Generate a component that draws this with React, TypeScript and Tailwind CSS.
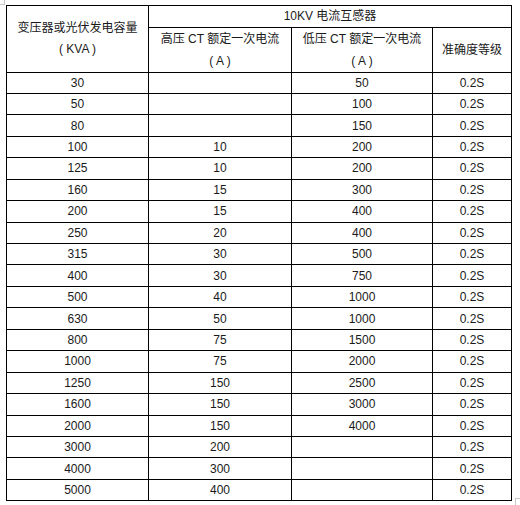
import React from 'react';

type Row = [string, string, string];

// 变压器容量 / 高压CT / 低压CT
const rows: Row[] = [
  ['30', '', '50'],
  ['50', '', '100'],
  ['80', '', '150'],
  ['100', '10', '200'],
  ['125', '10', '200'],
  ['160', '15', '300'],
  ['200', '15', '400'],
  ['250', '20', '400'],
  ['315', '30', '500'],
  ['400', '30', '750'],
  ['500', '40', '1000'],
  ['630', '50', '1000'],
  ['800', '75', '1500'],
  ['1000', '75', '2000'],
  ['1250', '150', '2500'],
  ['1600', '150', '3000'],
  ['2000', '150', '4000'],
  ['3000', '200', ''],
  ['4000', '300', ''],
  ['5000', '400', ''],
];

const cell = 'border border-black text-center align-middle p-0';

const App = () => {
  return (
    <div
      className="relative w-[520px] h-[505px] bg-white text-[12px] text-[#1a1a1a]"
      style={{ fontFamily: '"Liberation Sans", "Noto Sans CJK SC", sans-serif' }}
    >
      {/* word page corner marks */}
      <div className="absolute left-0 top-0 w-[5px] h-[5px] border-r border-b border-[#c8c8c8]" />
      <div className="absolute left-[515px] top-[498px] w-[5px] h-[7px] border-l border-t border-[#c8c8c8]" />

      <div className="pl-[6px] pt-[5px]">
        <table className="border-collapse table-fixed w-[505px]">
          <colgroup>
            <col className="w-[142px]" />
            <col className="w-[143px]" />
            <col className="w-[141px]" />
            <col className="w-[79px]" />
          </colgroup>
          <thead>
            <tr className="h-[21.5px]">
              <th rowSpan={2} className={`${cell} font-normal leading-[21px]`}>
                <div>变压器或光伏发电容量</div>
                <div className="whitespace-pre">{'( KVA )'}</div>
              </th>
              <th colSpan={3} className={`${cell} font-normal leading-[20px]`}>
                10KV 电流互感器
              </th>
            </tr>
            <tr className="h-[43px]">
              <th className={`${cell} font-normal leading-[22px]`}>
                <div>高压 CT 额定一次电流</div>
                <div className="whitespace-pre">{'( A )'}</div>
              </th>
              <th className={`${cell} font-normal leading-[22px]`}>
                <div>低压 CT 额定一次电流</div>
                <div className="whitespace-pre">{'( A )'}</div>
              </th>
              <th className={`${cell} font-normal`}>准确度等级</th>
            </tr>
          </thead>
          <tbody>
            {rows.map(([kva, hv, lv]) => (
              <tr key={kva} className="h-[21.45px]">
                <td className={cell}>{kva}</td>
                <td className={cell}>{hv}</td>
                <td className={cell}>{lv}</td>
                <td className={cell}>0.2S</td>
              </tr>
            ))}
          </tbody>
        </table>
      </div>
    </div>
  );
};

export default App;
